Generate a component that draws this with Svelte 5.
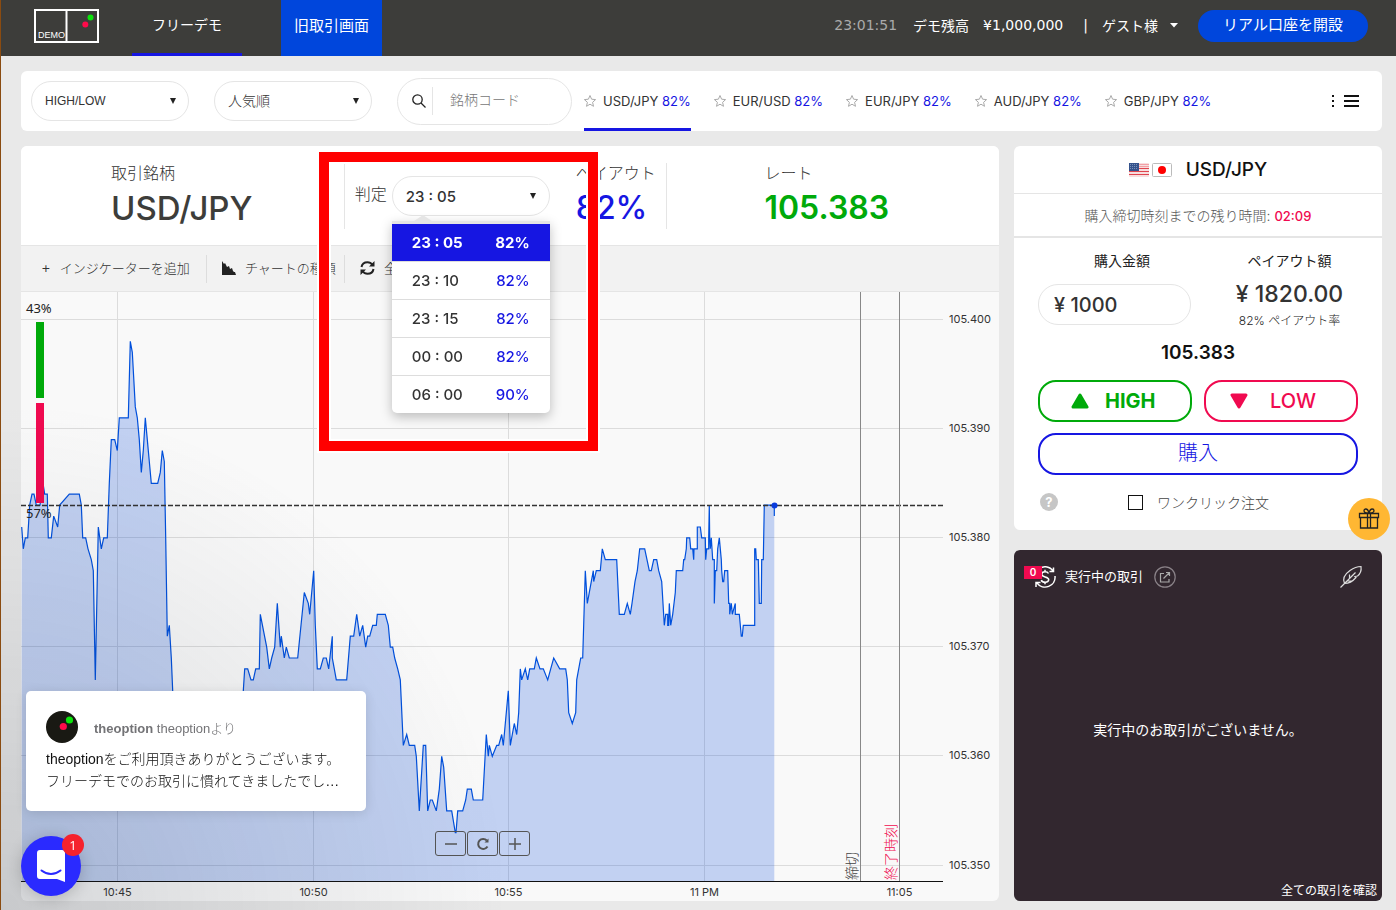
<script lang="ts">
  const pairs = ['USD/JPY', 'EUR/USD', 'EUR/JPY', 'AUD/JPY', 'GBP/JPY']

  const expiries = [
    { time: '23 : 05', payout: 82 },
    { time: '23 : 10', payout: 82 },
    { time: '23 : 15', payout: 82 },
    { time: '00 : 00', payout: 82 },
    { time: '06 : 00', payout: 90 },
  ]

  let activePair = $state('USD/JPY')
  let expiry = $state('23 : 05')
  let isOpen = $state(true)
  let amount = $state('¥ 1000')
  let oneClick = $state(false)
  let search = $state('')

  // ticks are [time, price], price is the last three digits of 105.xxx
  const history = [
    {
      start: -63,
      ticks: [
        [65, 381], [70, 379], [76, 380], [83, 380], [89, 383], [96, 384], [102, 384], [109, 383], [120, 383],
        [129, 385], [134, 384], [142, 384], [145, 380], [154, 380], [161, 382], [173, 381], [179, 383],
        [208, 384], [238, 384], [244, 383], [248, 380], [257, 380], [264, 379], [274, 378], [280, 377],
        [286, 367], [295, 381], [304, 379], [311, 380], [322, 380], [328, 385], [334, 389], [344, 389],
        [352, 388], [358, 391], [385, 391], [391, 398], [397, 397], [406, 392], [412, 391], [418, 389],
        [424, 386], [430, 388], [436, 391], [442, 389], [448, 387], [454, 385], [473, 385], [481, 386],
        [487, 388], [493, 387], [497, 380], [502, 371], [508, 372], [514, 369], [518, 366], [530, 360],
        [620, 358], [720, 361], [730, 366], [734, 368], [743, 368], [753, 367], [760, 367], [767, 368],
        [778, 368], [781, 373], [800, 370], [808, 368], [815, 369], [824, 370], [832, 374], [841, 370],
        [844, 371], [853, 369], [859, 370], [868, 369], [893, 369], [913, 375], [925, 374], [929, 373],
      ],
    },
    {
      start: 477,
      ticks: [
        [401, 377], [406, 372], [412, 368], [421, 368], [430, 369], [439, 369], [446, 368], [457, 371],
        [457, 369], [463, 368], [469, 367], [500, 367], [511, 371], [521, 371], [530, 373], [539, 371],
        [548, 372], [557, 370], [563, 371], [569, 371], [578, 372], [589, 372], [592, 373], [616, 373],
        [625, 372], [631, 370], [638, 370], [644, 369], [653, 368], [661, 367], [670, 361], [680, 362],
        [688, 361], [704, 361], [709, 360], [718, 355], [730, 361], [737, 361], [743, 355], [751, 356],
        [757, 356], [769, 355], [778, 357], [785, 360], [791, 359], [800, 355], [815, 355], [826, 353],
        [828, 353], [833, 355], [848, 355], [857, 356], [862, 357], [874, 357], [880, 356], [908, 356],
        [919, 362], [925, 360], [928, 361], [937, 360], [950, 361], [956, 361], [965, 362], [970, 361],
        [985, 366], [991, 361], [1003, 363], [1010, 362], [1016, 364], [1021, 368], [1025, 367], [1036, 368],
        [1043, 367], [1049, 368], [1063, 368], [1069, 369], [1080, 368], [1090, 368], [1103, 367],
        [1112, 368], [1121, 369], [1139, 368], [1157, 368], [1162, 367], [1166, 364], [1177, 363],
        [1187, 364], [1190, 367],
      ],
    },
    {
      start: 1617,
      ticks: [
        [62, 369], [68, 369], [76, 377], [82, 374], [100, 377], [101, 376], [109, 377], [121, 377], [127, 379],
        [136, 378], [170, 378], [178, 373], [193, 373], [202, 374], [211, 373], [216, 374], [225, 376],
        [232, 377], [239, 379], [254, 379], [268, 377], [274, 377], [281, 378], [290, 378], [296, 377],
        [305, 376], [313, 372], [317, 373], [323, 373], [323, 372], [326, 372], [328, 374], [332, 372],
        [338, 373], [346, 375], [349, 377], [368, 377], [371, 378], [374, 378], [379, 379], [380, 380],
        [389, 380], [392, 379], [398, 379], [401, 378], [402, 379], [412, 379], [412, 381], [421, 381],
        [425, 380], [436, 380], [437, 378], [440, 379], [446, 379], [446, 380], [448, 383], [449, 380],
        [451, 379], [454, 380], [458, 378], [463, 378], [463, 374], [466, 377], [470, 377], [473, 379],
        [478, 380], [484, 378], [485, 377], [488, 376], [491, 376], [494, 377], [503, 377], [506, 374],
        [509, 374], [509, 373], [514, 374], [517, 373], [526, 374], [526, 373], [538, 373], [544, 371],
        [547, 371], [550, 372], [584, 372], [584, 379], [587, 379], [589, 378], [595, 378], [598, 374],
        [604, 374], [605, 378], [610, 378], [613, 383], [643, 383], [643, 382],
      ],
    },
  ]

  const PLOT_W = 922
  const PLOT_H = 589
  const priceY = (p: number) => 27.5 + (400 - p) * 10.92

  const line = history
    .flatMap(({ start, ticks }) => ticks.map(([t, p]) => `${((t + start) / 3).toFixed(1)},${priceY(p).toFixed(1)}`))
    .join(' ')
  const area = `0.7,${PLOT_H} ${line} 753.3,${PLOT_H}`

  const prices = [400, 390, 380, 370, 360, 350]
  const times = [
    { x: 96.5, label: '10:45' },
    { x: 292.5, label: '10:50' },
    { x: 487.5, label: '10:55' },
    { x: 683.5, label: '11 PM' },
    { x: 878.5, label: '11:05' },
  ]

  const choose = (time: string) => {
    expiry = time
  }
</script>

<div class="page">
  <header class="topbar">
    <a href="#home" class="logo" aria-label="theoption">
      <svg width="65" height="34" viewBox="0 0 65 34">
        <rect x="1" y="1" width="63" height="32" fill="none" stroke="#fff" stroke-width="2" />
        <path d="M32.500 1v32" stroke="#fff" stroke-width="2" />
        <circle cx="56.500" cy="8.500" r="3" fill="#0be30b" />
        <circle cx="51.300" cy="15.500" r="3" fill="#ff0a4a" />
        <text x="4" y="29" class="logo-text">DEMO</text>
      </svg>
    </a>
    <nav>
      <a href="#demo" class="nav-link current">フリーデモ</a>
      <a href="#classic" class="nav-link old">旧取引画面</a>
    </nav>
    <div class="account">
      <span class="clock">23:01:51</span>
      <span>デモ残高</span>
      <span class="balance">¥1,000,000</span>
      <span class="bar">|</span>
      <button class="guest">ゲスト様 <svg width="8" height="5" viewBox="0 0 8 5"><path d="M0 0h8L4 4.500z" fill="#fff" /></svg></button>
    </div>
    <a href="#open" class="open-account">リアル口座を開設</a>
  </header>

  <main>
    <section class="filters">
      <div class="pick">
        <select aria-label="HIGH/LOW" class="latin">
          <option>HIGH/LOW</option>
        </select>
      </div>
      <div class="pick">
        <select aria-label="人気順">
          <option>人気順</option>
        </select>
      </div>
      <label class="search">
        <svg width="14" height="14" viewBox="0 0 14 14" fill="none" stroke="#222" stroke-width="1.300">
          <circle cx="5.500" cy="5.500" r="4.700" />
          <path d="M9 9l4.500 4.500" />
        </svg>
        <input type="text" placeholder="銘柄コード" aria-label="銘柄コード" bind:value={search} />
      </label>
      <div class="pairs">
        {#each pairs as pair}
          <button class="pair" class:active={pair === activePair} onclick={() => (activePair = pair)}>
            <svg width="13" height="13" viewBox="0 0 13 13" fill="none" stroke="#aaa">
              <path d="M6 0.500l1.600 3.700 4 .4-3 2.700.9 4-3.500-2.100L2.500 11.300l.9-4-3-2.700 4-.4z" />
            </svg>
            <span>{pair} <b>82%</b></span>
          </button>
        {/each}
      </div>
      <button class="menu" aria-label="メニュー">
        <svg width="30" height="16" viewBox="0 0 30 16" fill="#111">
          <path d="M1 2h2v2H1zM1 7h2v2H1zM1 12h2v2H1zM13 2h15v2H13zM13 7h15v2H13zM13 12h15v2H13z" />
        </svg>
      </button>
    </section>

    <div class="columns">
      <section class="chart-panel">
        <div class="quote">
          <div class="cell symbol">
            <span class="caption">取引銘柄</span>
            <strong>USD/JPY</strong>
          </div>
          <div class="cell payout-cell">
            <span class="caption">判定</span>
            <div class="expiry">
              <button class="expiry-toggle" aria-haspopup="listbox" aria-expanded={isOpen} onclick={() => (isOpen = !isOpen)}>
                {expiry}
                <svg width="8" height="6" viewBox="0 0 8 6"><path d="M1 0h6L4 6z" fill="#222" /></svg>
              </button>
              {#if isOpen}
                <div class="dropdown" role="listbox">
                  {#each expiries as item}
                    <button role="option" aria-selected={item.time === expiry} class:selected={item.time === expiry} onclick={() => choose(item.time)}>
                      <span>{item.time}</span>
                      <span class="rate">{item.payout}%</span>
                    </button>
                  {/each}
                </div>
              {/if}
            </div>
            <div class="payout">
              <span class="caption">ペイアウト</span>
              <strong>82%</strong>
            </div>
          </div>
          <div class="cell price">
            <span class="caption">レート</span>
            <strong>105.383</strong>
          </div>
        </div>

        <div class="toolbar">
          <button class="indicator"><span class="plus">+</span>インジケーターを追加</button>
          <button class="kind">
            <svg width="14" height="14" viewBox="0 0 14 14"><path d="M0 0l2 3 1-1 2 4 2-1 1 3 2-1 1 3 1 1h1l1 3H0z" fill="#222" /></svg>
            チャートの種類
          </button>
          <button class="reset">
            <svg width="15" height="14" viewBox="0 0 15 14" fill="none" stroke="#222" stroke-width="2">
              <path d="M1.500 6C2 3 4.500 1.200 7.500 1.200c2 0 3.800 1 4.900 2.600M13.500 8c-.5 3-3 4.800-6 4.800-2 0-3.800-1-4.900-2.600" />
              <path d="M14.500 0v5.500H9zM.5 14V8.500H6z" fill="#222" stroke="none" />
            </svg>
            全
          </button>
        </div>

        <div class="chart">
          <svg class="plot" viewBox="0 0 978 609">
            <g stroke="#dcdcdc">
              {#each prices as p}
                <path d="M0 {Math.round(priceY(p)) - 0.5}H{PLOT_W}" />
              {/each}
              {#each times.slice(0, 4) as t}
                <path d="M{t.x} 0V{PLOT_H}" />
              {/each}
            </g>
            <polygon points={area} fill="#0046dc" fill-opacity="0.22" />
            <polyline points={line} fill="none" stroke="#0050dc" stroke-width="1.200" />
            <path d="M0 213.500H{PLOT_W}" stroke="#333" stroke-width="1.300" stroke-dasharray="5 2" />
            <circle cx="753.500" cy="213.500" r="3" fill="#0a3cdc" />
            <path d="M839.500 0V{PLOT_H}M878.500 0V{PLOT_H}" stroke="#888" />
            <path d="M0 589.500H{PLOT_W}" stroke="#111" />

            <rect x="15" y="30" width="8" height="76" fill="#00aa0a" />
            <rect x="15" y="111" width="8" height="100" fill="#f00a50" />
            <text x="5" y="21" class="share">43%</text>
            <text x="5" y="226" class="share">57%</text>

            {#each prices as p}
              <text x="928" y={Math.round(priceY(p)) + 3} class="tick">105.{p}</text>
            {/each}
            {#each times as t}
              <text x={t.x} y="604" class="tick" text-anchor="middle">{t.label}</text>
            {/each}
            <text transform="translate(836 588) rotate(-90)" class="mark closing">締切</text>
            <text transform="translate(875 588) rotate(-90)" class="mark ending">終了時刻</text>
          </svg>
          <div class="zoom">
            <button aria-label="縮小"><svg width="14" height="14" viewBox="0 0 14 14"><path d="M1 7h12" /></svg></button>
            <button aria-label="リセット">
              <svg width="14" height="14" viewBox="0 0 14 14"><path d="M11.500 9.500A5 5 0 1 1 10.800 3.500" stroke-width="2" /><path d="M12.500 1.500v4H8.500z" fill="#555" stroke="none" /></svg>
            </button>
            <button aria-label="拡大"><svg width="14" height="14" viewBox="0 0 14 14"><path d="M1 7h12M7 1v12" /></svg></button>
          </div>
        </div>
        <div class="highlight"></div>
      </section>

      <aside>
        <section class="order">
          <h2>
            <svg width="43" height="14" viewBox="0 0 43 14">
              <rect width="20" height="14" rx="1" fill="#f7dede" />
              <path d="M0 5.500h20M0 8.500h20M0 11.500h20" stroke="#e0454f" />
              <path d="M10 1.500h10M10 3.500h10" stroke="#f3a0a6" />
              <rect width="10" height="8" fill="#34528c" />
              <path d="M1 1.500h8M1 3.500h8M1 5.500h8" stroke="#7890b8" stroke-dasharray="1 1" />
              <rect x="23.500" y=".5" width="19" height="13" rx="1" fill="#fff" stroke="#bbb" />
              <circle cx="33" cy="7" r="4" fill="#f00" />
            </svg>
            USD/JPY
          </h2>
          <p class="remaining">購入締切時刻までの残り時間: <b>02:09</b></p>
          <div class="amounts">
            <div>
              <label for="amount">購入金額</label>
              <input id="amount" type="text" bind:value={amount} />
            </div>
            <div>
              <span>ペイアウト額</span>
              <strong>¥ 1820.00</strong>
              <small>82% ペイアウト率</small>
            </div>
          </div>
          <p class="strike">105.383</p>
          <div class="sides">
            <button class="high">
              <svg width="18" height="16" viewBox="0 0 18 16"><path d="M9 2l7 12H2z" fill="#00aa0a" stroke="#00aa0a" stroke-width="3" stroke-linejoin="round" /></svg>
              HIGH
            </button>
            <button class="low">
              <svg width="18" height="16" viewBox="0 0 18 16"><path d="M9 14L2 2h14z" fill="#f00a50" stroke="#f00a50" stroke-width="3" stroke-linejoin="round" /></svg>
              LOW
            </button>
          </div>
          <button class="buy">購入</button>
          <div class="options">
            <button class="help" aria-label="ヘルプ">?</button>
            <label><input type="checkbox" bind:checked={oneClick} />ワンクリック注文</label>
          </div>
        </section>

        <section class="trades">
          <div class="trades-head">
            <svg width="22" height="22" viewBox="0 0 22 22" fill="none" stroke="#fff" stroke-width="1.500">
              <path d="M4 3.500A10 10 0 0 1 19 5M21 10A10 10 0 0 1 3 17M19.500 1.500v4h-4M2 21v-4.500h4.500" />
              <path d="M14.500 7.500c-.6-1.200-1.900-1.800-3.500-1.800-2 0-3.300 1-3.300 2.600 0 3.400 7 1.800 7 5.300 0 1.700-1.500 2.700-3.500 2.700s-3.400-.8-4-2.200M11 3.800v2M11 16.300v2" />
            </svg>
            <span class="count">0</span>
            <h3>実行中の取引</h3>
            <button aria-label="別ウィンドウで開く">
              <svg width="22" height="22" viewBox="0 0 22 22" fill="none" stroke="#aaa" stroke-width="1.200">
                <circle cx="11" cy="11" r="10.200" stroke="#8a8288" />
                <path d="M10 7.500H6.500v8.500h8.500v-3M9.500 12.500l6-6M12 6.500h3.500V10" />
              </svg>
            </button>
            <svg class="quill" width="24" height="24" viewBox="0 0 24 24" fill="none" stroke="#ddd" stroke-width="1.200">
              <path d="M1.500 22.500L16.500 7.500M5.500 18.500C3.500 14 6 9 11 5.500 14.500 3 19 1.500 22 1.500c.6 4-1 7.500-3.500 9.500l-2.500.5 1 1C14 16 9.500 18.500 5.500 18.500zM10.500 13.500V9.500M8 16h5" />
            </svg>
          </div>
          <p class="empty">実行中のお取引がございません。</p>
          <a href="#trades" class="all">全ての取引を確認</a>
        </section>
      </aside>
    </div>
  </main>

  <div class="shade"></div>
  <button class="gift" aria-label="ギフト">
    <svg width="22" height="22" viewBox="0 0 22 22" fill="none" stroke="#222" stroke-width="1.300">
      <path d="M1.500 5.500h19v4h-19zM2.500 9.500h17V20h-17zM9.500 5.500V20M12.500 5.500V20M10.500 5C7.500 5 6 3.800 6 2.700 6 1.700 6.800 1 7.800 1 9.500 1 10.500 3 11 5c.5-2 1.500-4 3.200-4 1 0 1.800.7 1.800 1.700C16 3.800 14.500 5 11.500 5" />
    </svg>
  </button>

  <div class="message">
    <div class="from">
      <svg width="32" height="32" viewBox="0 0 32 32">
        <circle cx="16" cy="16" r="16" fill="#191913" />
        <circle cx="23.500" cy="9" r="3.600" fill="#0be30b" />
        <circle cx="17.300" cy="15.500" r="3.600" fill="#ff0a4a" />
      </svg>
      <span><b>theoption</b> theoptionより</span>
    </div>
    <p>theoptionをご利用頂きありがとうございます。<br />フリーデモでのお取引に慣れてきましたでし…</p>
  </div>
  <button class="chat" aria-label="チャット">
    <svg width="28" height="32" viewBox="0 0 28 32">
      <path d="M3 0h22a3 3 0 0 1 3 3v29l-8-3H3a3 3 0 0 1-3-3V3a3 3 0 0 1 3-3z" fill="#fff" />
      <path d="M4.500 20.500c5.500 4.500 13.500 4.500 19 0" fill="none" stroke="#2a2aff" stroke-width="2" stroke-linecap="round" />
    </svg>
    <span>1</span>
  </button>
</div>

<style>
  :global(body) {
    background: #e9e9e9;
  }

  .page {
    --blue: #1616e2;
    --line: #e5e5e5;
    min-height: 100vh;
    box-sizing: border-box;
    border-left: 1px solid #8a4b10;
    display: flex;
    flex-direction: column;
    font-family: Inter, "Noto Sans CJK JP", sans-serif;
    font-size: 14px;
    font-weight: 400;
    color: #333;
  }

  .page * {
    box-sizing: border-box;
  }

  button,
  select,
  input {
    font: inherit;
    color: inherit;
    background: none;
    border: 0;
    padding: 0;
    margin: 0;
  }

  button {
    cursor: pointer;
  }

  a {
    color: inherit;
    text-decoration: none;
  }

  h2,
  h3,
  p {
    margin: 0;
  }

  svg {
    display: block;
    flex: none;
  }

  .topbar {
    height: 56px;
    background: #3d3d3a;
    color: #fff;
    display: flex;
    padding: 0 28px 0 33px;
  }

  .logo {
    padding-top: 9px;
  }

  .logo-text {
    font: 9px "Liberation Sans", sans-serif;
    fill: #fff;
  }

  nav {
    display: flex;
    gap: 39px;
    margin-left: 33px;
  }

  .nav-link {
    display: flex;
    align-items: center;
    justify-content: center;
    padding-bottom: 8px;
  }

  .current {
    width: 110px;
    padding-bottom: 5px;
    border-bottom: 3px solid var(--blue);
  }

  .old {
    width: 101px;
    font-size: 15px;
    background: #0046dc;
  }

  .account {
    margin-left: auto;
    padding-bottom: 6px;
    display: flex;
    align-items: center;
    font-family: "DejaVu Sans", "Noto Sans CJK JP", sans-serif;
    white-space: nowrap;
  }

  .clock {
    color: #aaa;
    margin-right: 16px;
  }

  .balance {
    margin-left: 14px;
  }

  .bar {
    margin: 0 14px 0 20px;
  }

  .guest {
    display: flex;
    align-items: center;
    gap: 12px;
  }

  .open-account {
    width: 170px;
    height: 32px;
    margin: 10px 0 0 20px;
    border-radius: 16px;
    background: #0046dc;
    font-size: 15px;
    line-height: 30px;
    text-align: center;
  }

  main {
    flex: 1;
    display: flex;
    flex-direction: column;
    gap: 15px;
    padding: 15px 14px 9px 20px;
  }

  .filters {
    height: 60px;
    background: #fff;
    border-radius: 6px;
    display: flex;
    align-items: center;
    padding: 0 21px 0 10px;
  }

  .pick {
    position: relative;
    margin-right: 25px;
  }

  .pick::after {
    content: "";
    position: absolute;
    right: 13px;
    top: 17px;
    border: solid transparent;
    border-width: 6px 3px 0;
    border-top-color: #222;
    pointer-events: none;
  }

  .pick select {
    appearance: none;
    width: 158px;
    height: 40px;
    padding: 0 13px 2px;
    border: 1px solid var(--line);
    border-radius: 20px;
    font-weight: 300;
  }

  .pick .latin {
    padding-bottom: 0;
    font: 12px "Liberation Sans", sans-serif;
  }

  .search {
    width: 175px;
    height: 47px;
    padding-left: 14px;
    border: 1px solid var(--line);
    border-radius: 24px;
    display: flex;
    align-items: center;
  }

  .search input {
    width: 120px;
    height: 28px;
    margin-left: 6px;
    padding: 0 0 3px 17px;
    border-left: 1px solid var(--line);
    font-weight: 300;
  }

  .search input::placeholder {
    color: #777;
  }

  .pairs {
    align-self: stretch;
    display: flex;
    gap: 23px;
    margin-left: 12px;
  }

  .pair {
    display: flex;
    align-items: center;
    gap: 6px;
    font-size: 13px;
    white-space: nowrap;
    border: solid transparent;
    border-width: 3px 0;
  }

  .pair b {
    font-weight: 400;
    color: var(--blue);
  }

  .pair.active {
    border-bottom-color: var(--blue);
  }

  .menu {
    margin-left: auto;
  }

  .columns {
    flex: 1;
    display: grid;
    grid-template-columns: 1fr 368px;
    gap: 15px;
  }

  .chart-panel {
    position: relative;
    background: #f9f9f9;
    border-radius: 6px;
  }

  .quote {
    height: 99px;
    background: #fff;
    border-radius: 6px 6px 0 0;
    display: grid;
    grid-template-columns: 33fr 33fr 34fr;
  }

  .cell {
    padding-top: 16px;
    position: relative;
  }

  .cell + .cell::before {
    content: "";
    position: absolute;
    left: 0;
    top: 17px;
    height: 66px;
    border-left: 1px solid var(--line);
  }

  .caption {
    display: block;
    font-size: 16px;
    font-weight: 300;
    line-height: 22px;
  }

  .quote strong {
    display: block;
    font-size: 32px;
    font-weight: 500;
    line-height: 48px;
    color: #3d3d3a;
  }

  .symbol {
    padding-left: 90px;
  }

  .symbol strong {
    font-size: 33px;
  }

  .payout-cell {
    display: flex;
    padding-left: 11px;
  }

  .payout-cell > .caption {
    margin: 21px 5px 0 0;
  }

  .payout {
    margin-left: 26px;
  }

  .payout strong {
    color: var(--blue);
  }

  .price {
    padding-left: 98px;
  }

  .price strong {
    font-weight: 600;
    color: #00aa0a;
  }

  .expiry {
    position: relative;
    margin-top: 14px;
    z-index: 3;
  }

  .expiry-toggle {
    width: 158px;
    height: 40px;
    padding: 0 12px 0 13px;
    border: 1px solid var(--line);
    border-radius: 20px;
    display: flex;
    align-items: center;
    justify-content: space-between;
    font-size: 15px;
    font-weight: 500;
  }

  .dropdown {
    position: absolute;
    top: 45px;
    left: 0;
    width: 158px;
    background: #fff;
    border-top: 3px solid var(--line);
    border-radius: 0 0 5px 5px;
    box-shadow: 0 4px 12px rgba(0, 0, 0, 0.25);
  }

  .dropdown::before {
    content: "";
    position: absolute;
    top: -9px;
    left: 22px;
    border: solid transparent;
    border-width: 0 9px 6px;
    border-bottom-color: var(--line);
  }

  .dropdown button {
    width: 100%;
    height: 38px;
    padding: 0 20px;
    display: flex;
    align-items: center;
    justify-content: space-between;
    font-size: 15px;
    font-weight: 500;
  }

  .dropdown button:first-child {
    height: 37px;
  }

  .dropdown button + button {
    border-top: 1px solid #ddd;
  }

  .dropdown .rate {
    color: var(--blue);
  }

  .dropdown .selected,
  .dropdown .selected .rate {
    background: var(--blue);
    color: #fff;
    font-weight: 700;
  }

  .toolbar {
    height: 47px;
    background: #f2f2f2;
    border: solid var(--line);
    border-width: 1px 0;
    display: flex;
    align-items: center;
    font-size: 13px;
    font-weight: 300;
  }

  .toolbar button {
    height: 28px;
    display: flex;
    align-items: center;
    line-height: 24px;
    padding-bottom: 2px;
    white-space: nowrap;
  }

  .toolbar button + button {
    border-left: 1px solid #ddd;
  }

  .indicator {
    width: 185px;
    padding-left: 20px;
    gap: 9px;
  }

  .plus {
    font-size: 15px;
  }

  .kind {
    width: 138px;
    padding-left: 15px;
    gap: 9px;
  }

  .reset {
    padding-left: 15px;
    gap: 9px;
  }

  .chart {
    position: relative;
  }

  .plot {
    width: 100%;
    height: auto;
  }

  .share {
    font: 13px "Noto Sans", sans-serif;
    fill: #222;
  }

  .tick {
    font: 11px Inter, sans-serif;
    fill: #333;
  }

  .mark {
    font: 300 14px "Noto Sans CJK JP", sans-serif;
  }

  .closing {
    fill: #444;
  }

  .ending {
    fill: #f00a50;
  }

  .zoom {
    position: absolute;
    left: 414px;
    bottom: 45px;
    display: flex;
    gap: 1px;
  }

  .zoom button {
    width: 31px;
    height: 25px;
    border: 1px solid #555;
    border-radius: 3px;
    display: grid;
    place-items: center;
  }

  .zoom svg {
    fill: none;
    stroke: #555;
    stroke-width: 1.500;
  }

  .highlight {
    position: absolute;
    left: 298px;
    top: 6px;
    width: 279px;
    height: 299px;
    border: 10px solid #f00;
    box-shadow: 0 0 0 2px #fff, inset 0 0 0 2px #fff;
    pointer-events: none;
  }

  aside {
    display: flex;
    flex-direction: column;
    gap: 20px;
  }

  .order {
    height: 384px;
    background: #fff;
    border-radius: 6px;
  }

  h2 {
    height: 48px;
    border-bottom: 1px solid var(--line);
    display: flex;
    align-items: center;
    justify-content: center;
    gap: 14px;
    font-size: 19px;
    font-weight: 500;
    color: #111;
  }

  .remaining {
    height: 44px;
    border-bottom: 2px solid var(--line);
    line-height: 43px;
    text-align: center;
    font-weight: 300;
    color: #555;
  }

  .remaining b {
    font-size: 13px;
    font-weight: 500;
    color: #f00a50;
  }

  .amounts {
    display: grid;
    grid-template-columns: 168px 1fr;
    gap: 15px;
    padding: 12px 24px 0 24px;
    text-align: center;
    color: #222;
  }

  .amounts label,
  .amounts span,
  .amounts strong,
  .amounts small {
    display: block;
    line-height: 22px;
  }

  .amounts input {
    display: block;
    width: 153px;
    height: 41px;
    margin-top: 12px;
    padding: 0 15px;
    border: 1px solid var(--line);
    border-radius: 20px;
    font-size: 20px;
    font-weight: 500;
    color: #333;
  }

  .amounts strong {
    margin-top: 10px;
    font-size: 23px;
    font-weight: 500;
    line-height: 24px;
    color: #333;
  }

  .amounts small {
    margin-top: 4px;
    font-size: 12px;
    font-weight: 300;
  }

  .strike {
    margin-top: 9px;
    text-align: center;
    font-size: 19px;
    font-weight: 600;
    line-height: 24px;
    color: #111;
  }

  .sides {
    display: grid;
    grid-template-columns: 1fr 1fr;
    gap: 12px;
    padding: 15px 24px 0;
  }

  .sides button {
    height: 42px;
    border: 2px solid;
    border-radius: 18px;
    display: flex;
    align-items: center;
    font-size: 20px;
  }

  .high {
    color: #00aa0a;
    font-weight: 700;
    gap: 16px;
    padding-left: 31px;
  }

  .low {
    color: #f00a50;
    font-weight: 500;
    gap: 22px;
    padding-left: 24px;
  }

  .buy {
    display: block;
    width: calc(100% - 48px);
    height: 42px;
    margin: 11px 24px 0;
    border: 2px solid var(--blue);
    border-radius: 18px;
    color: var(--blue);
    font-size: 20px;
    font-weight: 300;
    line-height: 32px;
    padding-bottom: 2px;
  }

  .options {
    display: flex;
    align-items: center;
    margin: 17px 26px 0;
    font-weight: 300;
    color: #444;
  }

  .help {
    width: 18px;
    height: 18px;
    border-radius: 9px;
    background: #c6c6c6;
    color: #fff;
    font-size: 13px;
    font-weight: 700;
    line-height: 18px;
  }

  .options label {
    display: flex;
    align-items: center;
    gap: 14px;
    margin-left: 70px;
  }

  .options input {
    appearance: none;
    width: 15px;
    height: 15px;
    border: 1px solid #111;
    outline: 0;
  }

  .options input:checked {
    background: #111;
  }

  .trades {
    flex: 1;
    position: relative;
    background: #32272f;
    border-radius: 6px;
    color: #fff;
    display: flex;
    flex-direction: column;
  }

  .trades-head {
    display: flex;
    align-items: center;
    padding: 15px 19px 0 20px;
  }

  .count {
    position: absolute;
    left: 10px;
    top: 16px;
    width: 18px;
    height: 13px;
    background: #f00a50;
    font-size: 10px;
    font-weight: 600;
    line-height: 13px;
    text-align: center;
  }

  h3 {
    margin: 0 11px 0 9px;
    padding-bottom: 4px;
    font-size: 13px;
    font-weight: 400;
  }

  .quill {
    margin-left: auto;
  }

  .empty {
    flex: 1;
    padding-top: 130px;
    text-align: center;
  }

  .all {
    align-self: flex-end;
    padding: 0 5px 3px;
    font-size: 12px;
  }

  .shade {
    position: fixed;
    left: 1px;
    bottom: 0;
    width: 500px;
    height: 500px;
    background: radial-gradient(ellipse at bottom left, rgba(29, 39, 54, 0.16) 0, rgba(29, 39, 54, 0) 72%);
    pointer-events: none;
  }

  .gift {
    position: fixed;
    right: 6px;
    top: 498px;
    width: 42px;
    height: 42px;
    border-radius: 21px;
    background: #ffb733;
    display: grid;
    place-items: center;
  }

  .message {
    position: fixed;
    left: 26px;
    bottom: 99px;
    width: 340px;
    height: 120px;
    padding: 20px;
    background: #fff;
    border-radius: 5px;
    box-shadow: 0 2px 12px rgba(0, 0, 0, 0.12);
    font-family: "Liberation Sans", "Noto Sans CJK JP", sans-serif;
  }

  .from {
    display: flex;
    align-items: center;
    gap: 16px;
    font-size: 13px;
    font-weight: 300;
    color: #737376;
  }

  .from b {
    font-weight: 700;
  }

  .message p {
    margin-top: 5px;
    line-height: 22px;
    font-weight: 300;
    color: #111;
    white-space: nowrap;
  }

  .chat {
    position: fixed;
    left: 21px;
    bottom: 14px;
    width: 60px;
    height: 60px;
    border-radius: 30px;
    background: #2a2aff;
    box-shadow: 0 2px 16px rgba(0, 0, 0, 0.2);
    display: grid;
    place-items: center;
  }

  .chat span {
    position: absolute;
    right: -3px;
    top: -2px;
    width: 22px;
    height: 22px;
    border-radius: 11px;
    background: #f5222d;
    color: #fff;
    font: 13px/22px "Open Sans", sans-serif;
    text-align: center;
  }
</style>
